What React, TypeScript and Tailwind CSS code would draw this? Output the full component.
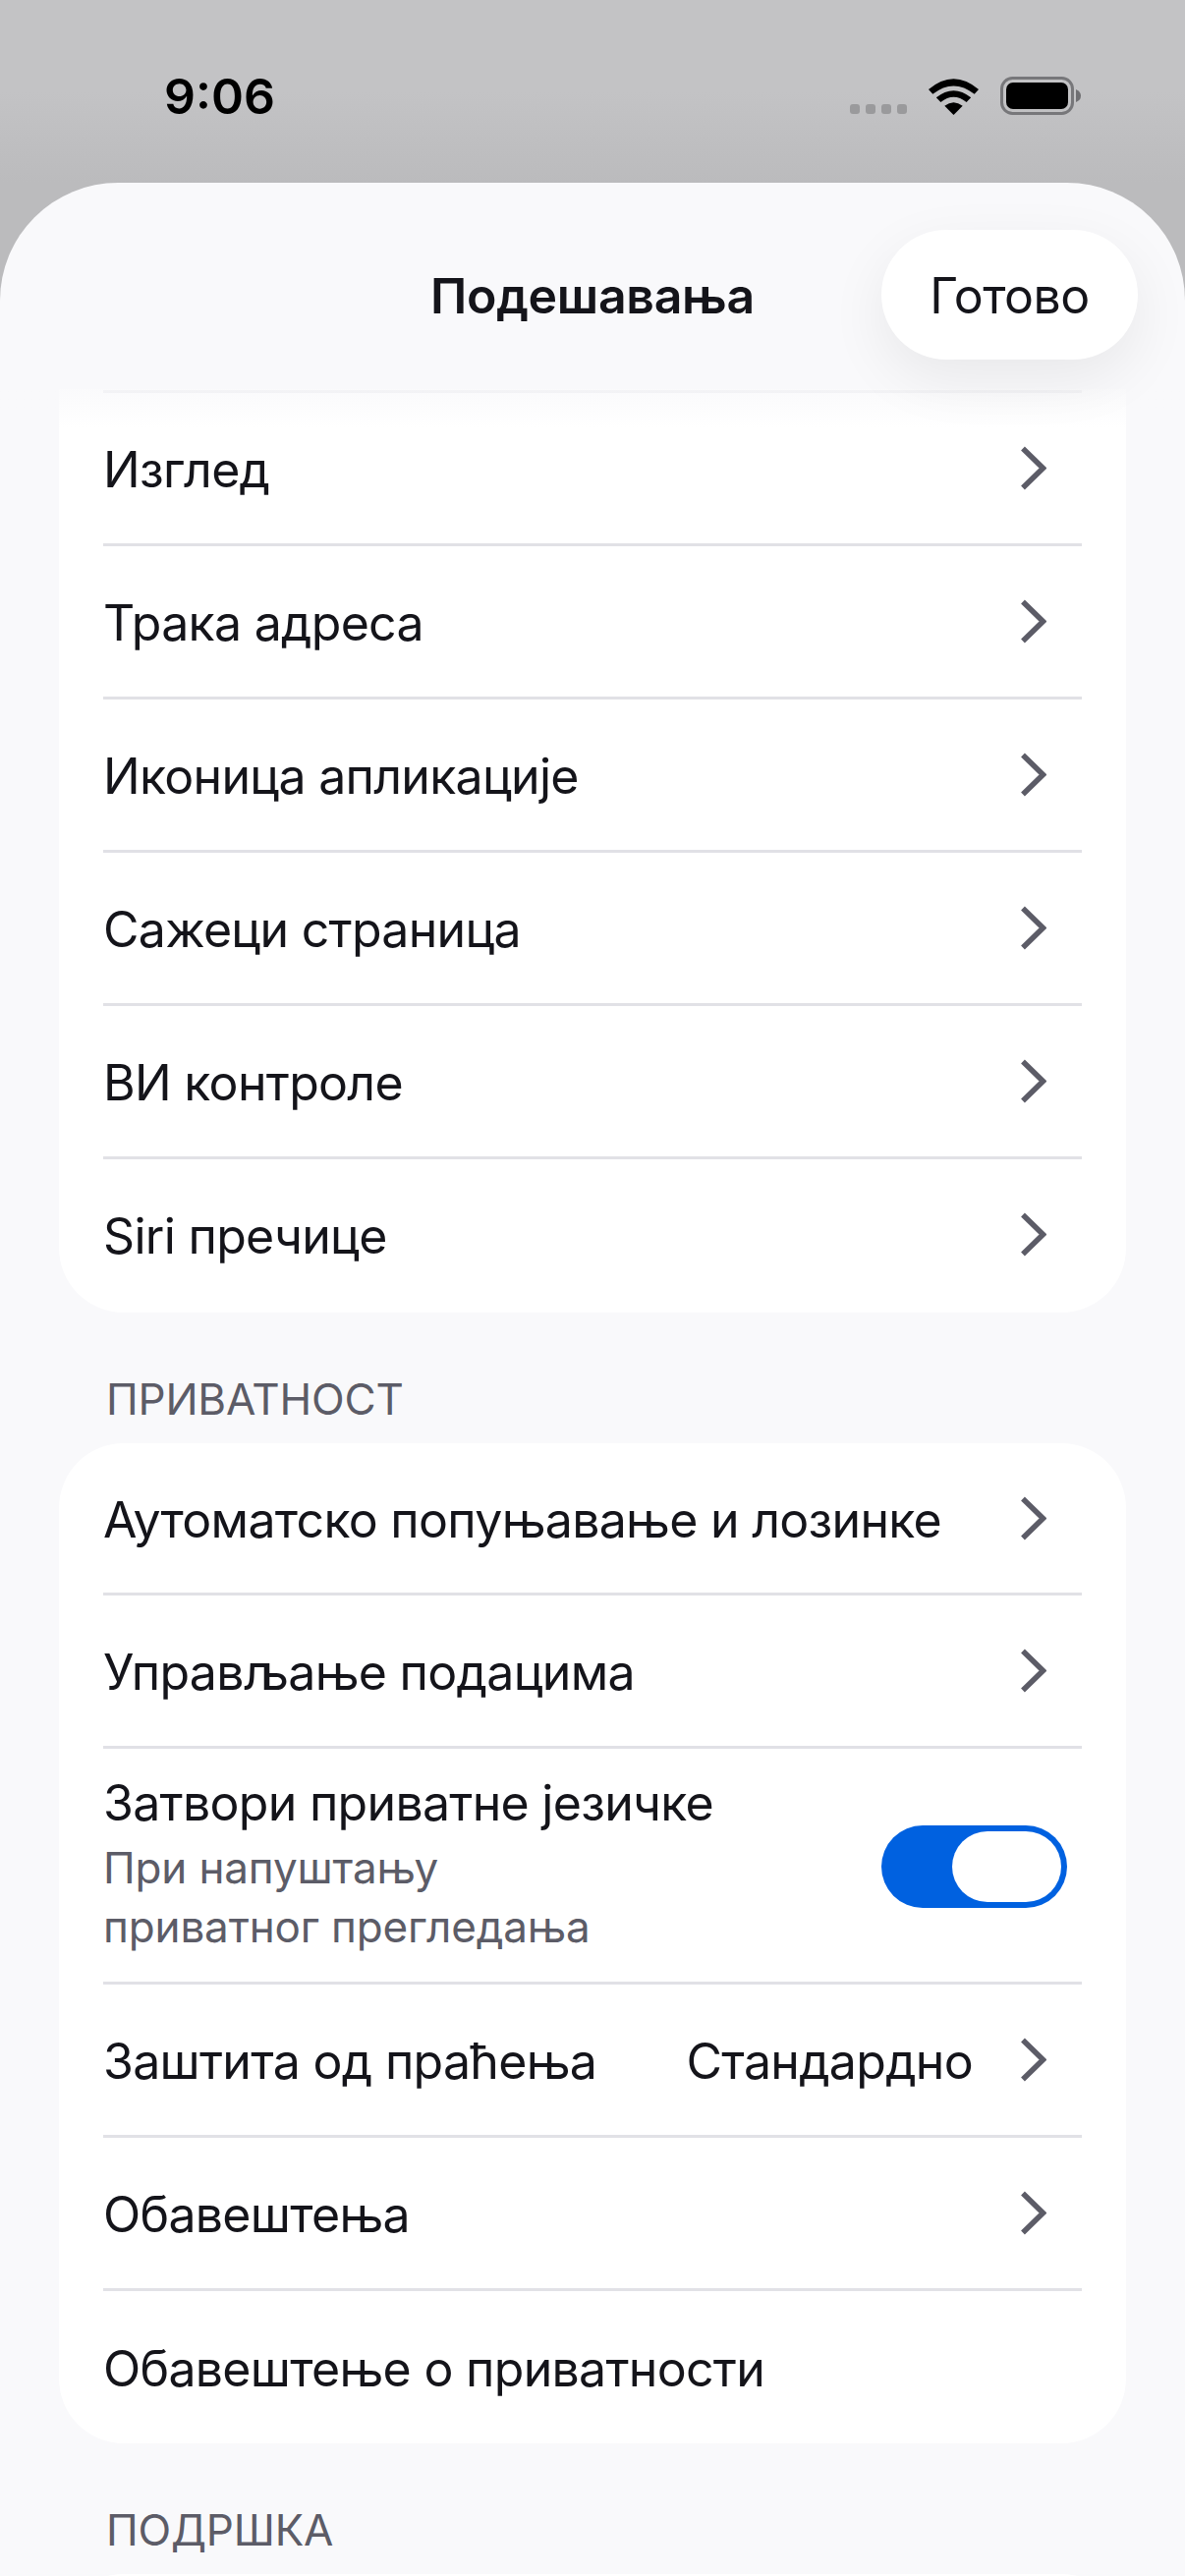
import React from 'react';

const font = { fontFamily: 'Inter, "Noto Sans", sans-serif' };

const Chevron = () => (
  <svg width="27" height="45" viewBox="0 0 27 45" fill="none" className="shrink-0">
    <path d="M3 2.5 L23.5 22.5 L3 42.5" stroke="#5c5c67" strokeWidth="5.5" />
  </svg>
);

const Row = ({ label, value, height = 'h-[156px]', first, noChevron }: { label: string; value?: string; height?: string; first?: boolean; noChevron?: boolean }) => (
  <div className={`${height} ${first ? '' : 'border-t-[3px] border-[#e1e1e6]'} ml-[45px] mr-[45px] flex items-center justify-between`}>
    <span className="pt-[3px] text-[50px] leading-[60px] tracking-[-0.7px] text-[#14141a] whitespace-nowrap">{label}</span>
    {!noChevron && (
      <div className="mr-[36px] flex items-center gap-[48px]">
        {value && <span className="pt-[3px] text-[50px] leading-[60px] tracking-[-0.7px] text-[#14141a]">{value}</span>}
        <Chevron />
      </div>
    )}
  </div>
);

const SectionLabel = ({ children }: { children: string }) => (
  <div className="h-[133px] pl-[108px] pt-[62px] text-[44px] leading-[52px] tracking-[-0.2px] text-[#5c5c67]">{children}</div>
);

const Toggle = () => (
  <div className="mt-[3px] flex h-[84px] w-[189px] items-center justify-end rounded-full bg-[#0061e0] pr-[6px]">
    <div className="h-[72px] w-[111px] rounded-full bg-white" />
  </div>
);

const StatusBar = () => (
  <div className="flex h-[186px] shrink-0 items-start justify-between bg-gradient-to-b from-[#c3c3c5] from-50% to-[#bbbbbd] pl-[167px] pr-[106px]">
    <span className="mt-[68px] text-[50px] font-semibold leading-[60px] text-black">9:06</span>
    <div className="mt-[78px] flex items-end">
      <div className="mb-[1px] flex gap-[6px]">
        <div className="h-[10px] w-[10px] rounded-[3px] bg-[#9a9a9c]" />
        <div className="h-[10px] w-[10px] rounded-[3px] bg-[#9a9a9c]" />
        <div className="h-[10px] w-[10px] rounded-[3px] bg-[#9a9a9c]" />
        <div className="h-[10px] w-[10px] rounded-[3px] bg-[#9a9a9c]" />
      </div>
      <svg width="51" height="37" viewBox="0 0 51 37" className="ml-[22px]" fill="black">
        <path d="M0 11 Q25.5 -10.5 51 11 L46.7 15.8 Q25.5 -1 4.3 15.8 Z" />
        <path d="M7.8 19.3 Q25.5 5 43.2 19.3 L38.6 23.9 Q25.5 13.5 12.4 23.9 Z" />
        <path d="M16.3 27.8 Q25.5 20.5 34.7 27.8 L25.5 37 Z" />
      </svg>
      <svg width="82" height="39" viewBox="0 0 82 39" className="ml-[22px]">
        <rect x="1.5" y="1.5" width="72" height="36" rx="11" fill="none" stroke="#77777a" strokeWidth="3" />
        <rect x="6" y="6" width="63" height="27" rx="7" fill="black" />
        <path d="M77 13 Q82 15 82 19.5 Q82 24 77 26 Z" fill="#6f6f72" />
      </svg>
    </div>
  </div>
);

export default function App() {
  return (
    <div style={font} className="flex h-[2622px] w-[1206px] flex-col overflow-hidden bg-[#bbbbbd]">
      <StatusBar />
      <div className="min-h-0 flex-1 overflow-hidden rounded-t-[120px] bg-[#f9f9fb]">
        <div className="relative z-10 grid h-[210px] grid-cols-[1fr_auto_1fr]">
          <div />
          <h1 className="mt-[85px] text-[50px] font-semibold leading-[60px] tracking-[-0.3px] text-[#14141a]">Подешавања</h1>
          <div className="flex justify-end pr-[48px] pt-[48px]">
            <button className="h-[132px] w-[261px] rounded-full bg-white pt-[2px] text-[50px] leading-[60px] tracking-[-0.5px] text-[#14141a] shadow-[0_20px_60px_rgba(0,0,0,0.07)]">
              Готово
            </button>
          </div>
          <div className="absolute left-0 right-0 top-[210px] -z-10 h-[40px] bg-gradient-to-b from-[#f9f9fb]/80 to-[#f9f9fb]/0" />
        </div>

        <div className="mx-[60px] rounded-b-[66px] bg-white">
          <div className="h-[1px]" />
          <Row label="Изглед" />
          <Row label="Трака адреса" />
          <Row label="Иконица апликације" />
          <Row label="Сажеци страница" />
          <Row label="ВИ контроле" />
          <Row label="Siri пречице" height="h-[159px] pb-[3px]" />
        </div>

        <SectionLabel>ПРИВАТНОСТ</SectionLabel>

        <div className="mx-[60px] rounded-[66px] bg-white">
          <Row first label="Аутоматско попуњавање и лозинке" height="h-[152px]" />
          <Row label="Управљање подацима" />
          <div className="ml-[45px] mr-[45px] flex h-[240px] items-center justify-between border-t-[3px] border-[#e1e1e6] pr-[15px]">
            <div className="pb-[2px]">
              <div className="text-[50px] leading-[60px] tracking-[-0.7px] text-[#14141a]">Затвори приватне језичке</div>
              <div className="mt-[6px] text-[44px] leading-[60px] tracking-[-0.15px] text-[#5c5c67]">
                При напуштању
                <br />
                приватног прегледања
              </div>
            </div>
            <Toggle />
          </div>
          <Row label="Заштита од праћења" value="Стандардно" />
          <Row label="Обавештења" />
          <Row noChevron label="Обавештење о приватности" height="h-[158px]" />
        </div>

        <SectionLabel>ПОДРШКА</SectionLabel>

        <div className="mx-[60px] h-[66px] rounded-t-[66px] bg-white" />
      </div>
    </div>
  );
}
